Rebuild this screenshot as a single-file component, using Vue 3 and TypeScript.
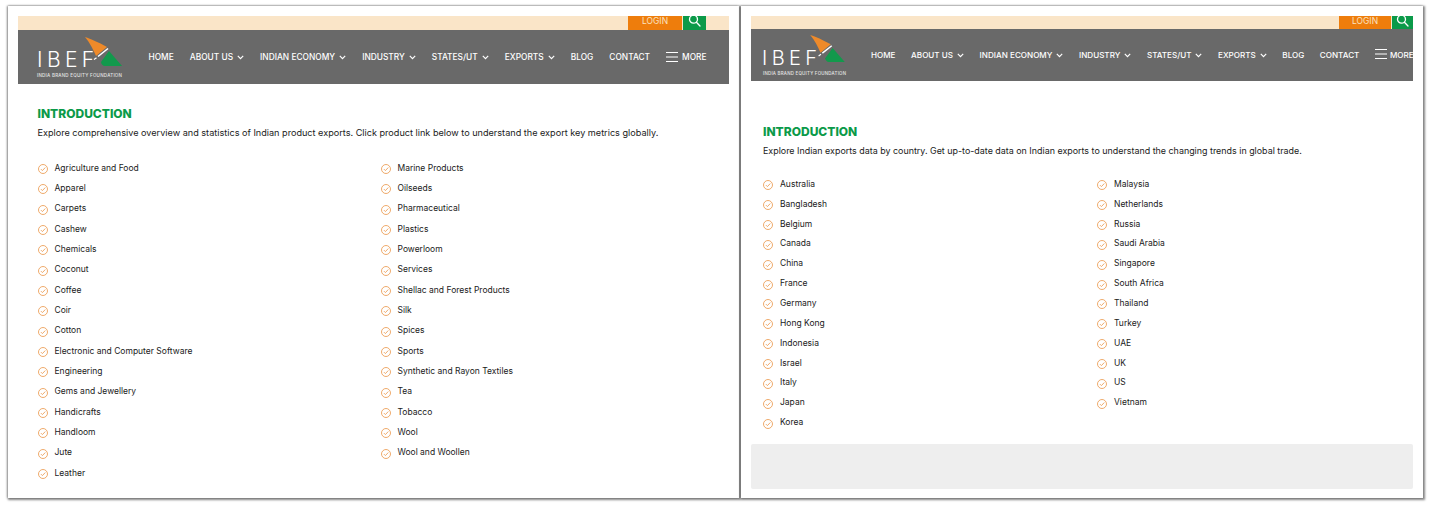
<script setup lang="ts">
interface NavItem { label: string; caret: boolean }
interface Panel {
  id: string
  desc: string
  cols: string[][]
}
const nav: NavItem[] = [
  { label: 'HOME', caret: false },
  { label: 'ABOUT US', caret: true },
  { label: 'INDIAN ECONOMY', caret: true },
  { label: 'INDUSTRY', caret: true },
  { label: 'STATES/UT', caret: true },
  { label: 'EXPORTS', caret: true },
  { label: 'BLOG', caret: false },
  { label: 'CONTACT', caret: false },
]
const panels: Panel[] = [
  {
    id: 'left',
    desc: 'Explore comprehensive overview and statistics of Indian product exports. Click product link below to understand the export key metrics globally.',
    cols: [
      ['Agriculture and Food','Apparel','Carpets','Cashew','Chemicals','Coconut','Coffee','Coir','Cotton','Electronic and Computer Software','Engineering','Gems and Jewellery','Handicrafts','Handloom','Jute','Leather'],
      ['Marine Products','Oilseeds','Pharmaceutical','Plastics','Powerloom','Services','Shellac and Forest Products','Silk','Spices','Sports','Synthetic and Rayon Textiles','Tea','Tobacco','Wool','Wool and Woollen'],
    ],
  },
  {
    id: 'right',
    desc: 'Explore Indian exports data by country. Get up-to-date data on Indian exports to understand the changing trends in global trade.',
    cols: [
      ['Australia','Bangladesh','Belgium','Canada','China','France','Germany','Hong Kong','Indonesia','Israel','Italy','Japan','Korea'],
      ['Malaysia','Netherlands','Russia','Saudi Arabia','Singapore','South Africa','Thailand','Turkey','UAE','UK','US','Vietnam'],
    ],
  },
]
</script>

<template>
  <div class="page">
    <section v-for="p in panels" :key="p.id" class="panel" :class="p.id">
      <header class="head">
        <div class="topbar">
          <a class="login">LOGIN</a>
          <a class="search">
            <svg width="13" height="13" viewBox="0 0 13 13" fill="none" stroke="#fff" stroke-width="1.3">
              <circle cx="5.5" cy="5.2" r="4" />
              <path d="M8.4 8.2 12 12" stroke-linecap="round" />
            </svg>
          </a>
        </div>
        <div class="navbar">
          <div class="logo">
            <svg class="wings" viewBox="0 0 37 30">
              <path d="M0 0C6 2 13 5 22 10L11 19C8 12 5 6 0 0Z" fill="#ee8a2a" />
              <path d="M13 19.5 23 11.5" stroke="#fff" stroke-width="1.6" />
              <path d="M9 22.5 11.5 20.7" stroke="#fff" stroke-width="1.2" />
              <path d="M16 25 24 14 37 29 20 29C18 29 16 27 16 25Z" fill="#12994c" />
            </svg>
            <span class="ibef">IBEF</span>
            <span class="tag">INDIA BRAND EQUITY FOUNDATION</span>
          </div>
          <nav class="menu">
            <a v-for="n in nav" :key="n.label" class="item">
              {{ n.label }}
              <svg v-if="n.caret" class="caret" width="7" height="5" viewBox="0 0 7 5" fill="none" stroke="#fff" stroke-width="1.2">
                <path d="M.8 .9 3.5 3.6 6.2 .9" />
              </svg>
            </a>
            <a class="item more">
              <svg width="12" height="10" viewBox="0 0 12 10" stroke="#fff" stroke-width="1">
                <path d="M0 .5H12M0 5H12M0 9.5H12" />
              </svg>
              MORE
            </a>
          </nav>
        </div>
      </header>
      <main class="body">
        <h2 class="title">INTRODUCTION</h2>
        <p class="desc">{{ p.desc }}</p>
        <div class="lists">
          <ul v-for="(col, i) in p.cols" :key="i" class="list">
            <li v-for="name in col" :key="name" class="row">
              <svg class="check" width="10" height="10" viewBox="0 0 10 10" fill="none" stroke="#eca05a" stroke-width=".9">
                <circle cx="5" cy="5" r="4.5" />
                <path d="M2.9 5.1 4.4 6.6 7.3 3.5" />
              </svg>
              {{ name }}
            </li>
          </ul>
        </div>
      </main>
      <div v-if="p.id === 'right'" class="footer-box"></div>
    </section>
  </div>
</template>

<style>
html, body { background: #fff; }
</style>

<style scoped>
.page {
  width: 1431px;
  height: 509px;
  padding: 6px 8px 0;
  box-sizing: border-box;
  display: flex;
  gap: 2px;
  overflow: hidden;
  font-family: Inter, "Liberation Sans", sans-serif;
}
.panel {
  height: 492px;
  box-sizing: border-box;
  padding: 10px 10px 0;
  background: #fff;
  box-shadow: 1px 1px 2px 1px rgba(70, 70, 70, .65), -1px 0 2px rgba(70, 70, 70, .45), 0 -1px 2px rgba(0, 0, 0, .06);
  overflow: hidden;
  flex: none;
}
.left { width: 731px; }
.right { width: 682px; }

.topbar {
  height: 14px;
  background: #fae5c8;
  display: flex;
  justify-content: flex-end;
  overflow: hidden;
}
.right .topbar { height: 13px; }
.left .topbar { padding-right: 23px; }
.login {
  width: 54px;
  background: #ee7d0c;
  color: #fbe3c0;
  font-size: 8.5px;
  line-height: 11px;
  text-align: center;
}
.search {
  margin-left: 1px;
  width: 23px;
  background: #0b9a49;
  display: flex;
  justify-content: center;
}
.search svg { margin-top: -2px; }
.right .login { width: 52px; }
.right .search { width: 21px; }

.navbar {
  height: 54px;
  background: #696969;
  display: flex;
  align-items: center;
  overflow: hidden;
}
.right .navbar { height: 52px; }
.logo {
  position: relative;
  flex: none;
  width: 130.5px;
  height: 100%;
}
.right .logo { width: 120px; }
.wings {
  position: absolute;
  left: 67px;
  top: 7px;
  width: 37px;
  height: 30px;
}
.right .wings {
  left: 59px;
  top: 6px;
  width: 35px;
  height: 28px;
}
.ibef {
  position: absolute;
  left: 19px;
  top: 18px;
  color: #fff;
  font-size: 21px;
  line-height: 24px;
  font-weight: 300;
  letter-spacing: 4.4px;
}
.right .ibef { left: 11px; top: 17px; font-size: 20px; letter-spacing: 4.4px; }
.tag {
  position: absolute;
  left: 19px;
  top: 43px;
  color: #e4e4e4;
  font-size: 4.5px;
  line-height: 6px;
  font-weight: 500;
  white-space: nowrap;
  letter-spacing: .24px;
}
.right .tag { left: 12px; top: 42px; font-size: 4.4px; }
.menu {
  display: flex;
  align-items: center;
  gap: 16.05px;
  color: #fff;
  white-space: nowrap;
}
.right .menu { gap: 15.6px; }
.item {
  display: flex;
  align-items: center;
  gap: 4px;
  font-size: 8.35px;
  font-weight: 500;
  line-height: 12px;
}
.right .item { font-size: 8.1px; }
.more { gap: 4px; }
.right .more { gap: 3px; }
.right .more svg { margin-top: -2px; }

.body { padding: 0 19.5px; }
.left .body { padding-top: 22px; }
.right .body { padding: 43px 0 0 12px; }
.title {
  margin: 0;
  color: #0b9a49;
  font-size: 12px;
  line-height: 15px;
  font-weight: 800;
}
.desc {
  margin: 5px 0 0;
  color: #1a1a1a;
  font-size: 9.12px;
  line-height: 14px;
  white-space: nowrap;
}
.right .desc { font-size: 8.92px; }
.lists {
  display: grid;
  grid-template-columns: 343px 1fr;
  margin-top: 17.5px;
}
.right .lists { grid-template-columns: 334px 1fr; margin-top: 16px; }
.list { margin: 0; padding: 0; list-style: none; }
.row {
  display: flex;
  align-items: center;
  gap: 7px;
  height: 20.33px;
  color: #1a1a1a;
  font-size: 8.5px;
}
.right .row { height: 19.85px; }
.check { flex: none; margin-top: 3px; }
.footer-box {
  height: 45px;
  margin-top: 12px;
  background: #eee;
  border-radius: 2px;
}
</style>
